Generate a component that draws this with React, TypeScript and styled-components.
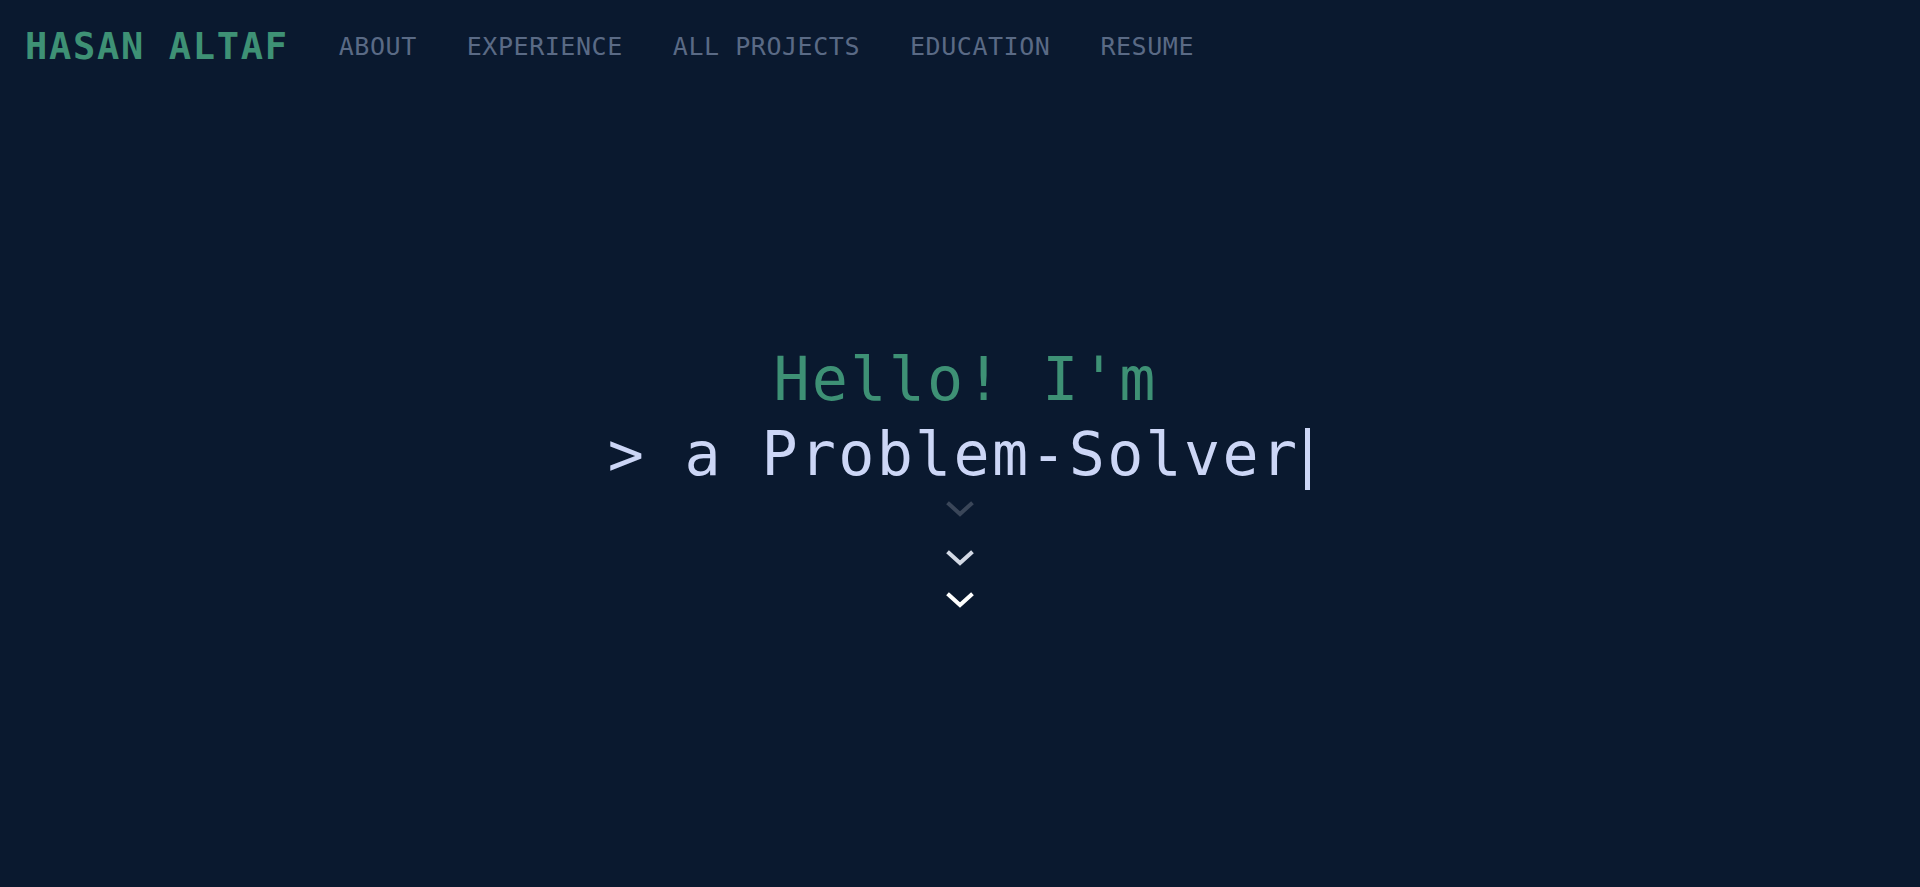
import React from "react";
import styled, { createGlobalStyle } from "styled-components";

const GlobalStyle = createGlobalStyle`
  html, body {
    margin: 0;
    padding: 0;
    background: #0a192f;
  }
  #root {
    min-height: 100vh;
  }
  * { box-sizing: border-box; }
`;

const mono = `"DejaVu Sans Mono", "Liberation Mono", monospace`;

const Page = styled.div`
  min-height: 100vh;
  background: #0a192f;
  font-family: ${mono};
  display: flex;
  flex-direction: column;
`;

const Header = styled.header`
  height: 92px;
  padding: 0 24px 0 25px;
  display: flex;
  align-items: center;
  gap: 50px;
`;

const Logo = styled.a`
  font-size: 37px;
  letter-spacing: 1.7px;
  font-weight: 700;
  color: #3e9175;
  text-decoration: none;
  white-space: pre;
`;

const Nav = styled.nav`
  display: flex;
  align-items: center;
  gap: 50px;
`;

const NavLink = styled.a`
  font-size: 25px;
  letter-spacing: 0.55px;
  color: #5a6a85;
  text-decoration: none;
  white-space: pre;
`;

const Hero = styled.main`
  display: flex;
  flex-direction: column;
  align-items: center;
  padding-top: 250px;
`;

const Greeting = styled.h1`
  margin: 0;
  padding-left: 11px;
  font-size: 60px;
  letter-spacing: 2.3px;
  line-height: 75px;
  font-weight: 400;
  color: #3e9175;
  white-space: pre;
`;

const TypedLine = styled.div`
  display: flex;
  align-items: flex-start;
  font-size: 60px;
  letter-spacing: 2.3px;
  line-height: 75px;
  color: #ccd6f6;
  white-space: pre;
`;

const Cursor = styled.span`
  display: block;
  width: 5px;
  height: 62px;
  margin: 11px 2px 0 6px;
  background: #ccd6f6;
`;

const Chevron = styled.svg<{ $gap: number }>`
  display: block;
  width: 30px;
  height: 20px;
  margin-top: ${(p) => p.$gap}px;
`;

const chevrons = [
  { color: "#3a4659", gap: 7 },
  { color: "#d3d9e5", gap: 29 },
  { color: "#ffffff", gap: 22 },
];

export default function App() {
  return (
    <>
      <GlobalStyle />
      <Page>
        <Header>
          <Logo href="#">HASAN ALTAF</Logo>
          <Nav>
            {["ABOUT", "EXPERIENCE", "ALL PROJECTS", "EDUCATION", "RESUME"].map((l) => (
              <NavLink key={l} href="#">
                {l}
              </NavLink>
            ))}
          </Nav>
        </Header>
        <Hero>
          <Greeting>Hello! I'm</Greeting>
          <TypedLine>
            <span>{"> a Problem-Solver"}</span>
            <Cursor />
          </TypedLine>
          {chevrons.map((c, i) => (
            <Chevron key={i} $gap={c.gap} viewBox="0 0 30 20" fill="none">
              <polyline
                points="4,5 15,15 26,5"
                stroke={c.color}
                strokeWidth="4"
                strokeLinecap="square"
              />
            </Chevron>
          ))}
        </Hero>
      </Page>
    </>
  );
}
